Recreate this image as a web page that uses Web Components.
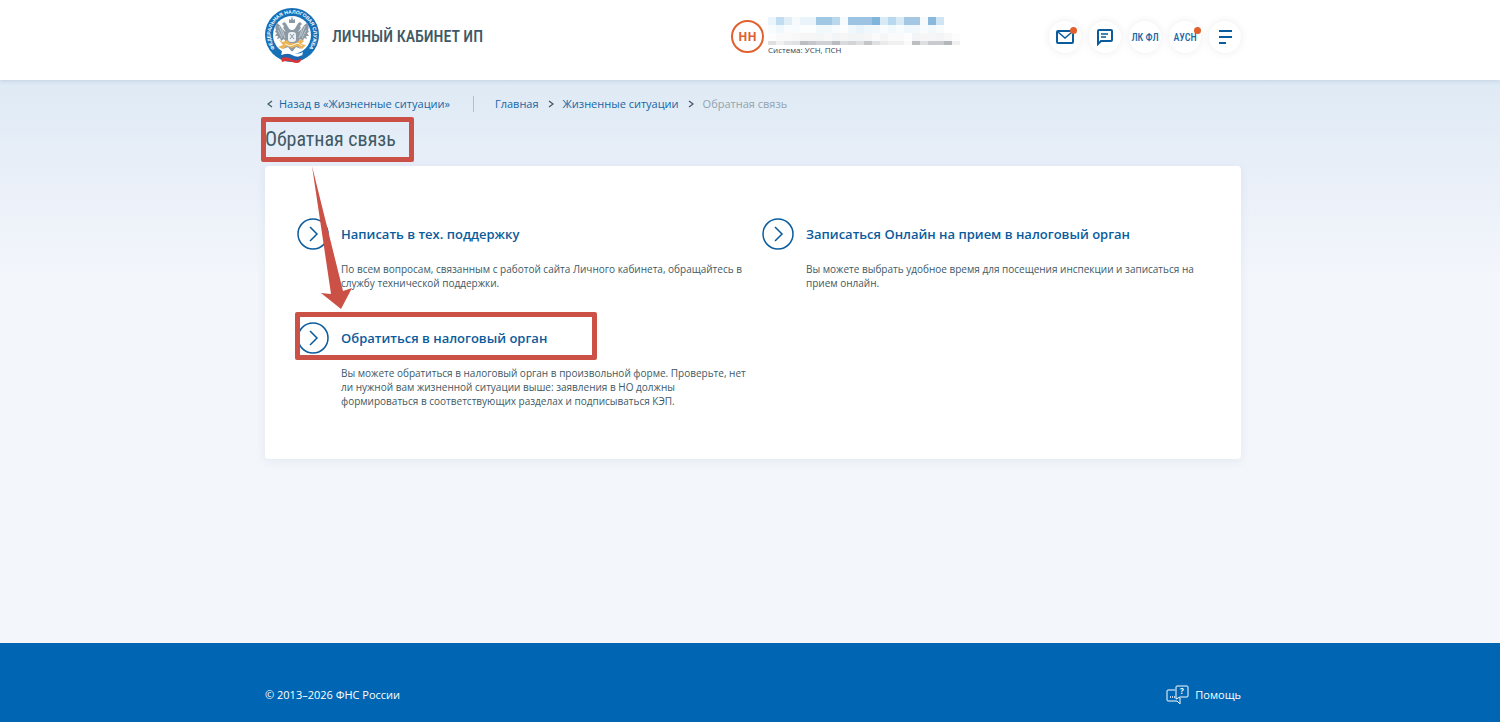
<!DOCTYPE html>
<html lang="ru">
<head>
<meta charset="utf-8">
<title>Обратная связь</title>
<style>
  html, body { margin: 0; min-height: 100%; }
  body {
    font-family: "Open Sans", "Noto Sans", sans-serif;
    color: #405965;
    --blue: #0a5c9c;
    --accent: #e0602f;
    --mark: #cb5146;
    --narrow: "Roboto Condensed", "Liberation Sans Narrow", "Open Sans Condensed", sans-serif;
  }
</style>
</head>
<body>
<lk-page>
  <lk-header slot="header" system="УСН, ПСН"></lk-header>
  <lk-breadcrumbs></lk-breadcrumbs>
  <lk-title>Обратная связь</lk-title>
  <lk-panel>
    <lk-option heading="Написать в тех. поддержку">По всем вопросам, связанным с работой сайта Личного кабинета, обращайтесь в службу технической поддержки.</lk-option>
    <lk-option heading="Записаться Онлайн на прием в налоговый орган">Вы можете выбрать удобное время для посещения инспекции и записаться на прием онлайн.</lk-option>
    <lk-option heading="Обратиться в налоговый орган" marked>Вы можете обратиться в налоговый орган в произвольной форме. Проверьте, нет ли нужной вам жизненной ситуации выше: заявления в НО должны формироваться в соответствующих разделах и подписываться КЭП.</lk-option>
  </lk-panel>
  <lk-footer slot="footer"></lk-footer>
</lk-page>

<script>
class LkElement extends HTMLElement {
  connectedCallback() {
    if (this.shadowRoot) return;
    this.attachShadow({ mode: 'open' }).innerHTML = this.render();
  }
}

// shared centred column
const shell = `
  .shell { box-sizing: border-box; width: 100%; max-width: 982px; margin: 0 auto; padding-left: 6px; }
`;

customElements.define('lk-page', class extends LkElement {
  render() {
    return `
      <style>
        ${shell}
        :host { display: flex; flex-direction: column; min-height: 100vh; background: linear-gradient(#deeaf5 80px, #ebf0f9 190px, #f3f6fb 280px, #f3f6fa); }
        main { flex: 1; }
      </style>
      <slot name="header"></slot>
      <main><div class="shell"><slot></slot></div></main>
      <slot name="footer"></slot>`;
  }
});

customElements.define('lk-emblem', class extends LkElement {
  render() {
    return `
      <style>
        :host { display: block; width: 54px; height: 56px; }
        svg { display: block; }
        text { font: bold 5px "Liberation Sans", sans-serif; fill: #fff; }
      </style>
      <svg width="54" height="56" viewBox="0 0 54 56" role="img" aria-label="ФНС России">
        <defs><path id="ring" d="M11.8 42.2A21.5 21.5 0 1 1 42.2 42.2"/></defs>
        <circle cx="27" cy="27" r="27" fill="#1570b8"/>
        <circle cx="27" cy="27" r="19" fill="#fff"/>
        <text><textPath href="#ring" startOffset="50%" text-anchor="middle">ФЕДЕРАЛЬНАЯ НАЛОГОВАЯ СЛУЖБА</textPath></text>
        <g fill="#8b99a5">
          <path d="M26 22C22 20 23 16 19 14L17 16L19 18C17 20 20 22 21 24C17 22 16 17 12 15C10 18 10 20 11 22L10 24L12 25L10 28L13 28L12 31L15 30L16 33L19 31L22 36L18 41L23 39L27 44L31 39L36 41L32 36L35 31L38 33L39 30L42 31L41 28L44 28L42 25L44 24L43 22C44 20 44 18 42 15C38 17 37 22 33 24C34 22 37 20 35 18L37 16L35 14C31 16 32 20 28 22Z"/>
          <path d="M24 15L24 11L26 12L27 8L28 12L30 11L30 15Z"/>
        </g>
        <path d="M14 18L18 28M16 18L20 30M40 18L36 28M38 18L34 30M13 22L17 30M41 22L37 30" stroke="#dfe5e9" stroke-width=".6"/>
        <rect x="23" y="24" width="8" height="10" rx="3" fill="#eef1f3"/>
        <path d="M25 26L29 31M29 26L25 31" stroke="#8193a1"/>
        <path d="M14 32L18 34L22 32L25 35L31 35L36 31L39 33L36 36L41 37L37 41L32 38L27 40L22 38L18 41L13 39L18 37Z" fill="#e9b45a"/>
        <path d="M20 36L25 38L33 35L37 38" fill="none" stroke="#fff3d2"/>
        <path d="M17 43Q24 41 28 44T38 44L37 48Q32 50 27 47T16 48Z" fill="#fff"/>
        <path d="M16 47Q23 45 27 48T37 47L36 51Q32 53 27 50T16 51Z" fill="#2364ad"/>
        <path d="M16 50Q22 48 27 51T37 50L35 54Q32 56 27 54T17 54Z" fill="#d93438"/>
      </svg>`;
  }
});

// pixelated personal data; colours row by row, 8px cells
const mosaicRows = [
  [0, 8, 'eaf5fc c0dcf0 e0eef8 f6fafd e9f3fa e9f3fa a0c8e4 a0c8e4 b8d8ee f6fafd 9cc4e2 9cc4e2 9cc4e2 80b4da d8eaf6 b8d8ee d8eaf6 a4c8e4 a4c8e4 f6fafd 88b8dc d0e4f4'],
  [8, 8, 'f8fcff eff8fd f8fcff f8fcff fbfdff fbfdff f2f9fd f2f9fd f8fcff fbfdff eff8fd eaf5fb eff8fd f2f9fd f8fcff f2f9fd f8fcff eff8fd f2f9fd f8fcff f2f9fd f8fcff'],
  [16, 8, 'fdfdfd fafafa fafafa f8f8f8 f6f6f6 f6f6f6 f4f5f5 f8f8f8 f3f4f5 f6f6f6 f3f4f5 f3f4f5 f6f6f6 fafafa f6f6f6 fafafa fafafa fdfdfd f3f4f5 f6f6f6 f6f6f6 f3f4f5 f8f8f8 fdfdfd'],
  [24, 4, 'dedfe1 f0f0f1 e4e5e7 e0e1e3 bcbec2 c4c6c9 d0d1d4 cfd0d3 b9bcc0 d8dadc d3d4d6 dedfe1 c3c6c9 dedfe1 e9eaeb f0f0f1 f0f0f1 fafafa bcbec2 dedfe1 c8cacd c8cacd b3b7bb f0f0f1']
];
const mosaicRects = mosaicRows.map(([y, h, cells]) =>
  cells.split(' ').map((c, i) => `<rect x="${i * 8}" y="${y}" width="8" height="${h}" fill="#${c}"/>`).join('')
).join('');

customElements.define('lk-user', class extends LkElement {
  render() {
    return `
      <style>
        :host { display: flex; align-items: center; gap: 4px; }
        .avatar { box-sizing: border-box; width: 33px; height: 33px; border: 2px solid var(--accent); border-radius: 50%; display: grid; place-items: center; font-size: 12px; font-weight: 700; color: var(--accent); }
        .info { display: flex; flex-direction: column; }
        svg { display: block; }
        .system { font-size: 8px; line-height: 10px; color: #2f4554; }
      </style>
      <div class="avatar">НН</div>
      <div class="info">
        <svg width="192" height="28" shape-rendering="crispEdges" aria-hidden="true">${mosaicRects}</svg>
        <span class="system">Система: ${this.getAttribute('system')}</span>
      </div>`;
  }
});

customElements.define('lk-round-button', class extends LkElement {
  render() {
    return `
      <style>
        :host { display: block; position: relative; }
        button { display: grid; place-items: center; width: 32px; height: 32px; padding: 0; border: 0; border-radius: 50%; background: #fff; box-shadow: 0 0 8px #00000014; color: #1567a6; font: 500 10px var(--narrow); white-space: nowrap; }
        :host([dot])::after { content: ""; position: absolute; top: 6px; right: 0; width: 7px; height: 7px; border-radius: 50%; background: var(--accent); }
        :host([dot="inner"])::after { right: 4px; }
      </style>
      <button type="button" aria-label="${this.getAttribute('label')}"><slot></slot></button>`;
  }
});

customElements.define('lk-header', class extends LkElement {
  render() {
    return `
      <style>
        ${shell}
        :host { display: block; background: #fff; box-shadow: 0 1px 4px #4a6c8c30; }
        .shell { display: flex; align-items: center; height: 80px; }
        .brand { display: flex; align-items: center; gap: 13px; height: 72px; text-decoration: none; font: 500 16px var(--narrow); color: #405965; }
        .bar { display: flex; align-items: center; flex: 1; height: 72px; margin-bottom: 8px; }
        lk-user { margin-left: auto; }
        nav { display: flex; gap: 8px; margin-left: 89px; padding-top: 2px; }
        svg { display: block; fill: none; stroke: var(--blue); stroke-width: 2; }
      </style>
      <header class="shell">
        <div class="bar">
          <a class="brand" href="#"><lk-emblem></lk-emblem>ЛИЧНЫЙ КАБИНЕТ ИП</a>
          <lk-user system="${this.getAttribute('system')}"></lk-user>
          <nav>
            <lk-round-button label="Сообщения" dot="inner"><svg width="18" height="14"><rect x="1" y="1" width="16" height="12" rx="1"/><path d="M2 2L9 8L16 2" stroke-width="1.5"/></svg></lk-round-button>
            <lk-round-button label="Чат"><svg width="18" height="18"><path d="M2 16V3Q2 2 3 2H15Q16 2 16 3V12Q16 13 15 13H5Z"/><path d="M5 6H12M5 9H10" stroke-width="1.5"/></svg></lk-round-button>
            <lk-round-button label="ЛК ФЛ">ЛК ФЛ</lk-round-button>
            <lk-round-button label="АУСН" dot>АУСН</lk-round-button>
            <lk-round-button label="Меню"><svg width="14" height="14"><path d="M1 1H14M1 7H14M1 13H8"/></svg></lk-round-button>
          </nav>
        </div>
      </header>`;
  }
});

customElements.define('lk-breadcrumbs', class extends LkElement {
  render() {
    const chevron = '<svg width="6" height="8" viewBox="0 0 6 8"><path d="M1 1L5 4L1 7"/></svg>';
    return `
      <style>
        :host { display: block; padding-top: 16px; font-size: 11px; line-height: 16px; }
        nav { display: flex; align-items: center; gap: 9px; }
        a { color: #1567a6; text-decoration: none; }
        .back { display: flex; align-items: center; gap: 6px; padding: 0 14px 0 2px; }
        .back svg { transform: scaleX(-1); }
        .sep { width: 1px; height: 16px; margin-right: 12px; background: #b4c1cc; }
        .current { color: #93a2af; }
        svg { fill: none; stroke: #405965; stroke-width: 1.3; }
      </style>
      <nav aria-label="Навигация">
        <a class="back" href="#">${chevron}<span>Назад в «Жизненные ситуации»</span></a>
        <span class="sep"></span>
        <a href="#">Главная</a>${chevron}
        <a href="#">Жизненные ситуации</a>${chevron}
        <span class="current">Обратная связь</span>
      </nav>`;
  }
});

customElements.define('lk-title', class extends LkElement {
  render() {
    return `
      <style>
        :host { display: block; padding: 12px 0; }
        h1 { position: relative; width: max-content; margin: 0; font: 400 20px/30px var(--narrow); color: #405965; }
        .mark { position: absolute; box-sizing: border-box; top: -7px; bottom: -8px; left: -4px; width: 153px; border: 5px solid var(--mark); border-radius: 2px; }
        .arrow { position: absolute; z-index: 1; top: 42px; left: 47px; pointer-events: none; }
      </style>
      <h1>
        <slot></slot>
        <span class="mark"></span>
        <svg class="arrow" width="42" height="146" aria-hidden="true"><path d="M0 0L31 125L40 122L29 143L9 127L19 128Z" fill="#cb5146"/></svg>
      </h1>`;
  }
});

customElements.define('lk-panel', class extends LkElement {
  render() {
    return `
      <style>
        :host { display: block; }
        section { display: grid; grid-template-columns: 1fr 1fr; gap: 32px 0; padding: 52px 14px 51px 32px; border-radius: 4px; background: #fff; box-shadow: 0 2px 10px #6484a81c; }
      </style>
      <section><slot></slot></section>`;
  }
});

customElements.define('lk-option', class extends LkElement {
  render() {
    return `
      <style>
        :host { display: block; }
        h2 { position: relative; margin: 0 0 12px; font-size: 13px; line-height: 32px; font-weight: 600; }
        a { display: flex; align-items: center; gap: 12px; color: var(--blue); text-decoration: none; }
        svg { flex: none; fill: none; stroke: var(--blue); stroke-width: 1.5; }
        p { margin: 0 10px 0 44px; font-size: 10px; line-height: 14px; }
        .mark { position: absolute; box-sizing: border-box; top: -10px; bottom: -6px; left: -2px; width: 302px; border: 5px solid var(--mark); border-radius: 2px; }
      </style>
      <h2>
        <a href="#"><svg width="32" height="32"><circle cx="16" cy="16" r="15"/><path d="M13 9L20 16L13 23"/></svg>${this.getAttribute('heading')}</a>
        ${this.hasAttribute('marked') ? '<span class="mark"></span>' : ''}
      </h2>
      <p><slot></slot></p>`;
  }
});

customElements.define('lk-footer', class extends LkElement {
  render() {
    return `
      <style>
        ${shell}
        :host { display: block; background: #0066b3; color: #fff; font-size: 11px; line-height: 20px; }
        .shell { display: flex; align-items: center; justify-content: space-between; padding-top: 42px; padding-bottom: 17px; }
        a { display: flex; align-items: center; gap: 6px; color: inherit; text-decoration: none; }
        svg { display: block; fill: none; stroke: #fff; }
        text { font: bold 8px "Open Sans", sans-serif; fill: #fff; stroke: none; }
      </style>
      <footer class="shell">
        <span>© 2013–2026 ФНС России</span>
        <a href="#">
          <svg width="23" height="20" aria-hidden="true"><path d="M9 5H2Q1 5 1 6V15Q1 16 2 16H11L14 19V13"/><path d="M11 1H21Q22 1 22 2V11Q22 12 21 12H14L10 14V2Q10 1 11 1Z"/><path d="M4 12H5M6 12H7M8 12H9" stroke-width="1.5"/><text x="14" y="9">?</text></svg>
          Помощь
        </a>
      </footer>`;
  }
});
</script>
</body>
</html>
